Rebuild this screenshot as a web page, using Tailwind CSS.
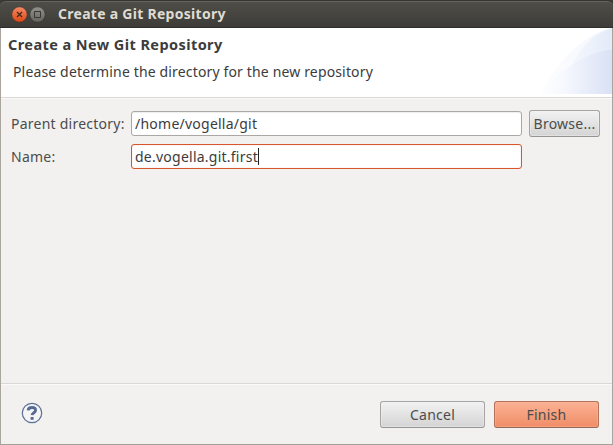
<!DOCTYPE html>
<html lang="en">
<head>
<meta charset="utf-8">
<title>Create a Git Repository</title>
<script src="https://cdn.jsdelivr.net/npm/@tailwindcss/browser@4"></script>
</head>
<body class="bg-[#3c3b37]">
<div class="w-[613px] h-[445px] flex flex-col overflow-hidden font-['Noto_Sans',sans-serif] text-[14px] leading-[20px] tracking-[0.24px] text-[#3c3c3c] whitespace-nowrap">
  <header class="h-[28px] shrink-0 flex items-center pl-[12px] rounded-t-[6px] border-t border-[#353430] border-b border-b-[#2f2e2b] bg-linear-to-b from-[#504e48] to-[#3d3c38] shadow-[inset_0_1px_0_#66645d]">
    <svg class="w-[34px] h-[18px] shrink-0" viewBox="0 0 34 18" fill="none">
      <defs>
        <linearGradient id="r" x2="0" y2="1"><stop stop-color="#f58b66"/><stop offset="1" stop-color="#dc4713"/></linearGradient>
        <linearGradient id="g" x2="0" y2="1"><stop stop-color="#93918a"/><stop offset="1" stop-color="#66645d"/></linearGradient>
      </defs>
      <circle cx="7.5" cy="9.5" r="7.7" fill="url(#r)" stroke="#34332f" stroke-width=".6"/>
      <path d="M5 7l5 5m0-5l-5 5" stroke="#42251a" stroke-width="1.2"/>
      <circle cx="25.5" cy="9.5" r="7.7" fill="url(#g)" stroke="#34332f" stroke-width=".6"/>
      <path d="M22.5 6.5h6v6h-6z" stroke="#393834"/>
    </svg>
    <h1 class="ml-[12px] font-bold text-[14px] tracking-[0.28px] text-[#dfdbd2]">Create a Git Repository</h1>
  </header>
  <main class="flex-1 min-h-0 flex flex-col border border-t-0 border-[#aaa59f] border-b-[#a4a19b] bg-[#f2f1f0]">
    <section class="h-[69px] shrink-0 flex justify-between bg-white">
      <div class="pt-[6px] pl-[7px]">
        <h2 class="font-bold text-[14.5px] tracking-[0.42px]">Create a New Git Repository</h2>
        <p class="mt-[8px] ml-[5px] tracking-[0.15px]">Please determine the directory for the new repository</p>
      </div>
      <svg class="w-[75px] h-[66px] shrink-0" viewBox="0 0 75 66">
        <defs>
          <linearGradient id="a" gradientUnits="userSpaceOnUse" x1="3" x2="75"><stop stop-color="#fdfdff"/><stop offset="1" stop-color="#f4f7fd"/></linearGradient>
          <linearGradient id="c" gradientUnits="userSpaceOnUse" x1="32" x2="75"><stop stop-color="#f6f9fe"/><stop offset="1" stop-color="#e3eaf8"/></linearGradient>
          <linearGradient id="b" gradientUnits="userSpaceOnUse" x1="3" x2="75"><stop stop-color="#fefeff"/><stop offset=".3" stop-color="#f7f9fe"/><stop offset="1" stop-color="#d9e1f5"/></linearGradient>
        </defs>
        <path d="M3 66C17 40 43 6 75 0v66z" fill="url(#a)"/>
        <path d="M22 66C34 36 46 8 75 0v66z" fill="url(#c)"/>
        <path d="M3 66C22 44 45 25 75 21.500v44.500z" fill="url(#b)"/>
      </svg>
    </section>
    <section class="flex-1 min-h-0 grid grid-cols-[114px_391px_72px] grid-rows-[27px_26px] gap-x-[6px] gap-y-[6px] items-center content-start pt-[12px] pl-[10px] border-t border-[#d9d8d7] shadow-[inset_0_1px_0_#fafafa] text-[#4c4c4c]">
      <label>Parent directory:</label>
      <div class="h-[25px] flex items-center pl-[3px] rounded-[3px] border border-[#aaa7a4] bg-white text-[#3c3c3c] shadow-[inset_0_1px_1px_#eeeeee]"><span>/home/vogella/git</span></div>
      <button class="h-[27px] ml-[1px] rounded-[3px] border border-[#a6a4a2] border-b-[#969492] bg-linear-to-b from-[#f2f2f2] to-[#d4d4d4] shadow-[inset_0_0_0_1px_#f5f5f566]">Browse...</button>
      <label class="pt-[2px]">Name:</label>
      <div class="h-[25px] flex items-center pl-[3px] rounded-[3px] border border-[#d8562c] bg-white text-[#3c3c3c] shadow-[inset_0_0_1px_#efa68c]"><span class="pt-px">de.vogella.git.first</span><i class="w-px h-[17px] bg-[#222]"></i></div>
    </section>
    <footer class="h-[61px] shrink-0 flex items-center border-t border-[#d9d8d7] shadow-[inset_0_1px_0_#fafafa] pl-[20px] pr-[13px] text-[#4c4c4c]">
      <svg class="w-[22px] h-[22px] shrink-0 -mt-[2px]" viewBox="0 0 22 22" fill="none">
        <circle cx="11" cy="11" r="9.7" fill="#f5f5f6" stroke="#5c6f96" stroke-width="1.2"/>
        <path d="M7.1 8.4C7.200 6.200 9 5.500 11 5.500s3.600 1 3.600 2.800c0 2.500-3.300 2.300-3.600 4.900" stroke="#566a92" stroke-width="2.8"/>
        <path d="M9.600 15h3v2.800H9.600z" fill="#566a92"/>
      </svg>
      <button class="ml-auto w-[105px] h-[27px] pt-px rounded-[3px] border border-[#a6a4a2] border-b-[#969492] bg-linear-to-b from-[#f2f2f2] to-[#d4d4d4] shadow-[inset_0_0_0_1px_#f5f5f566]">Cancel</button>
      <button class="ml-[9px] w-[105px] h-[27px] pt-px rounded-[3px] border border-[#b5725a] border-b-[#966656] bg-linear-to-b from-[#fbb194] to-[#ef8d66] shadow-[inset_0_0_0_1px_#ffb99e66]">Finish</button>
    </footer>
  </main>
</div>
</body>
</html>
